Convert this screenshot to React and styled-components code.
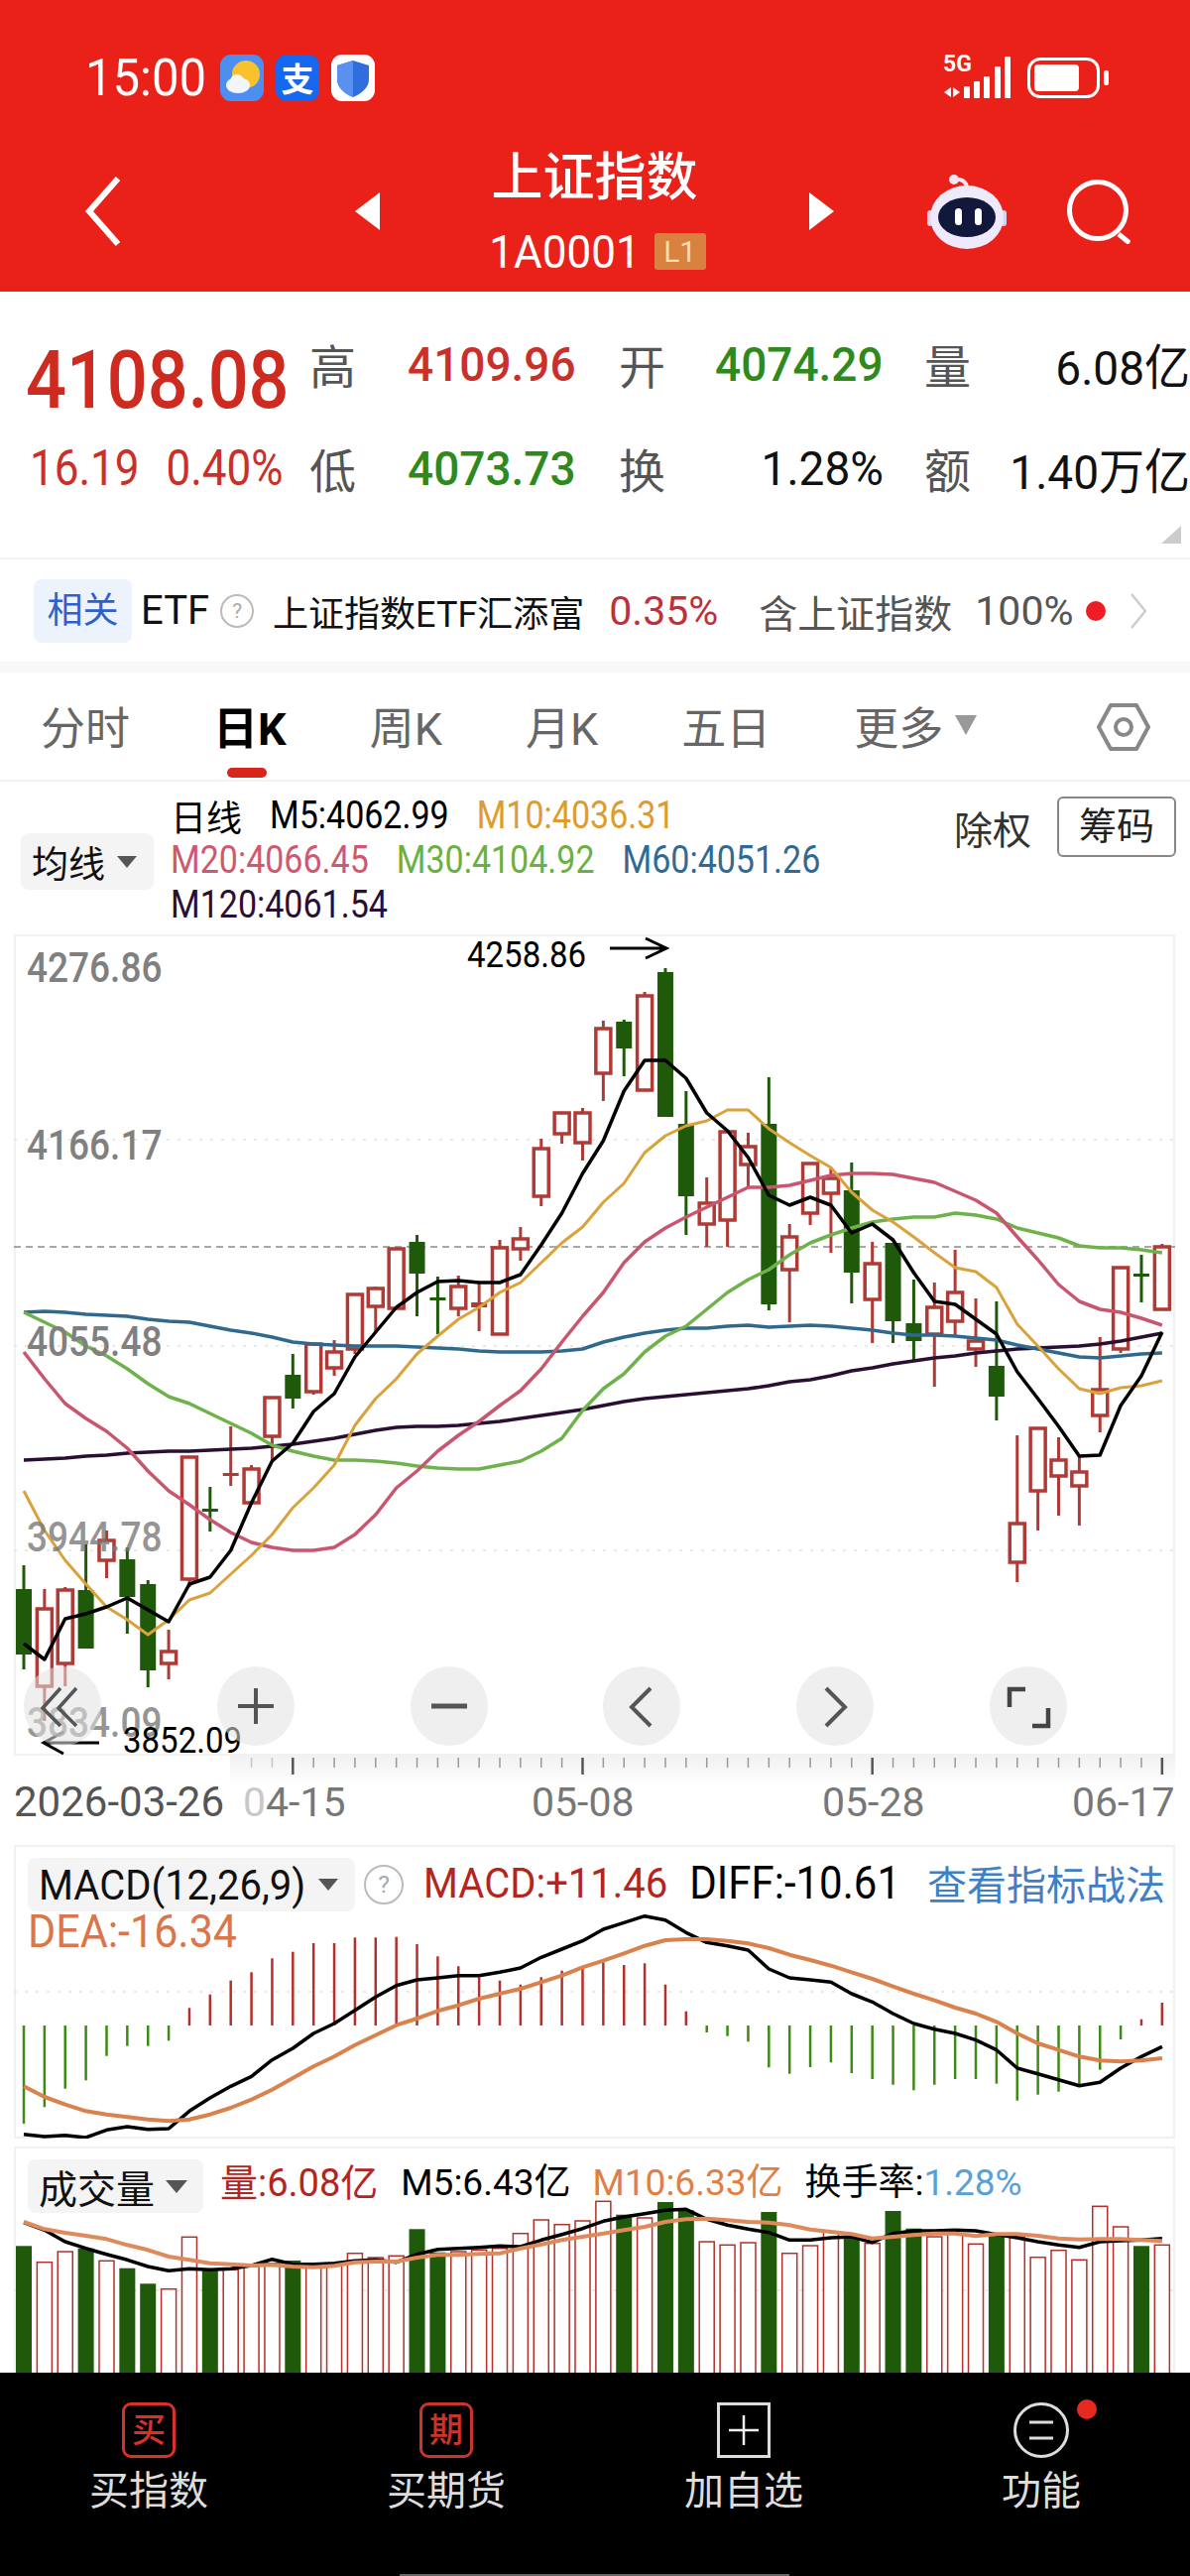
import styled, { createGlobalStyle } from "styled-components"

const GlobalStyle = createGlobalStyle`
  html, body {
    margin: 0;
    padding: 0;
    background: #fff;
  }
  body {
    font-family: Roboto, "Noto Sans CJK SC", sans-serif;
  }
`

const RED = "#b03a35"
const GREEN = "#1f5a0b"
const X = (i) => 24 + 20.87 * i
const line = (arr) => arr.map((y, i) => `${X(i).toFixed(1)},${y}`).join(" ")

// kind, high, body top, body bottom, low
const candles = [
  ["g", 1578, 1602, 1668, 1683], ["r", 1602, 1622, 1700, 1735], ["r", 1600, 1603, 1677, 1700], ["g", 1557, 1603, 1662, 1662],
  ["r", 1543, 1553, 1573, 1591], ["g", 1560, 1572, 1610, 1647], ["g", 1593, 1597, 1684, 1701], ["r", 1643, 1665, 1677, 1693],
  ["r", 1469, 1469, 1592, 1600], ["g", 1499, 1521, 1523, 1544], ["r", 1438, 1485, 1487, 1498], ["r", 1477, 1481, 1515, 1517],
  ["r", 1409, 1409, 1448, 1473], ["g", 1365, 1386, 1410, 1420], ["r", 1355, 1355, 1403, 1406], ["r", 1351, 1363, 1379, 1387],
  ["r", 1305, 1305, 1360, 1365], ["r", 1297, 1299, 1317, 1343], ["r", 1259, 1259, 1319, 1319], ["g", 1245, 1252, 1284, 1327],
  ["g", 1287, 1308, 1310, 1345], ["r", 1286, 1297, 1319, 1327], ["r", 1292, 1313, 1317, 1342], ["r", 1250, 1258, 1345, 1345],
  ["r", 1237, 1249, 1259, 1271], ["r", 1148, 1158, 1206, 1216], ["r", 1122, 1122, 1143, 1153], ["r", 1117, 1122, 1152, 1170],
  ["r", 1029, 1037, 1082, 1110], ["g", 1028, 1030, 1057, 1085], ["r", 1000, 1004, 1099, 1099], ["g", 976, 980, 1126, 1126],
  ["g", 1100, 1133, 1206, 1245], ["r", 1187, 1213, 1234, 1257], ["r", 1141, 1141, 1230, 1257], ["r", 1142, 1156, 1174, 1197],
  ["g", 1086, 1133, 1315, 1321], ["r", 1234, 1247, 1280, 1333], ["r", 1173, 1173, 1223, 1235], ["r", 1178, 1188, 1203, 1263],
  ["g", 1172, 1200, 1283, 1314], ["r", 1252, 1274, 1310, 1354], ["g", 1253, 1253, 1332, 1354], ["g", 1290, 1334, 1352, 1372],
  ["r", 1293, 1318, 1345, 1398], ["r", 1260, 1303, 1332, 1346], ["r", 1309, 1352, 1360, 1378], ["g", 1312, 1377, 1408, 1432],
  ["r", 1447, 1536, 1575, 1595], ["r", 1440, 1440, 1503, 1543], ["r", 1449, 1472, 1488, 1528], ["r", 1468, 1484, 1498, 1538],
  ["r", 1348, 1401, 1427, 1444], ["r", 1278, 1278, 1360, 1364], ["g", 1265, 1284, 1286, 1313], ["r", 1254, 1257, 1320, 1320],
]

const ma5 = [1657,1673,1632,1627,1620,1611,1623,1635,1597,1590,1563,1515,1473,1455,1423,1405,1368,1343,1318,1303,1292,1291,1293,1293,1285,1255,1223,1183,1150,1100,1069,1069,1087,1122,1140,1167,1205,1215,1207,1215,1243,1234,1250,1283,1312,1315,1330,1345,1383,1410,1438,1468,1467,1417,1387,1343]
const ma10 = [1503,1543,1573,1597,1620,1633,1648,1633,1613,1606,1587,1568,1547,1520,1500,1477,1437,1410,1390,1365,1347,1330,1318,1303,1293,1273,1253,1237,1212,1193,1162,1145,1135,1130,1119,1119,1138,1152,1165,1177,1202,1220,1232,1247,1263,1278,1282,1298,1335,1357,1380,1400,1405,1399,1397,1392]
const ma20 = [1363,1390,1415,1430,1443,1460,1483,1503,1517,1532,1545,1555,1560,1563,1563,1560,1547,1527,1500,1483,1463,1447,1433,1417,1402,1380,1353,1327,1303,1273,1252,1238,1227,1217,1207,1197,1197,1195,1190,1185,1183,1183,1184,1188,1192,1201,1210,1223,1247,1270,1295,1312,1320,1323,1329,1336]
const ma30 = [1323,1333,1343,1357,1367,1380,1395,1408,1415,1425,1435,1445,1457,1463,1468,1472,1472,1473,1475,1478,1480,1481,1481,1477,1473,1463,1450,1422,1400,1385,1363,1347,1337,1320,1303,1290,1280,1265,1253,1245,1238,1232,1229,1227,1227,1223,1225,1229,1238,1243,1248,1256,1258,1258,1260,1263]
const ma60 = [1323,1322,1323,1325,1326,1327,1330,1332,1333,1337,1341,1344,1348,1353,1355,1356,1357,1357,1357,1358,1359,1360,1362,1363,1363,1363,1362,1360,1353,1348,1344,1341,1339,1339,1337,1336,1338,1337,1336,1337,1339,1341,1344,1346,1346,1347,1349,1351,1356,1360,1364,1368,1369,1367,1365,1364]
const ma120 = [1472,1471,1470,1468,1467,1465,1464,1463,1463,1462,1461,1460,1458,1456,1453,1450,1446,1442,1439,1438,1438,1437,1435,1433,1430,1427,1424,1421,1417,1413,1410,1408,1406,1404,1402,1400,1397,1393,1391,1387,1382,1379,1375,1372,1369,1367,1364,1362,1360,1359,1358,1357,1355,1352,1348,1344]

// macd values read off the crop, y = 1840 + v / 3
const macdY = (v) => +(1840 + v / 3).toFixed(1)
const macdBars = [903,853,797,772,698,668,668,652,553,512,470,445,403,383,357,357,340,340,338,360,397,427,460,470,482,460,440,435,415,423,418,482,563,627,638,655,733,752,732,718,750,768,785,802,785,768,768,782,833,815,806,790,740,648,587,537]
const diff = [935,942,938,945,922,912,920,918,865,825,790,760,710,675,630,600,560,520,485,468,462,455,455,445,432,400,375,350,315,295,275,287,325,355,365,378,435,462,468,475,510,535,570,600,617,630,650,680,735,752,770,788,778,735,700,670]
const dea = [790,822,845,865,875,883,890,895,890,875,855,830,800,765,730,700,665,635,605,585,562,545,525,510,495,475,455,430,410,388,365,348,345,345,350,358,372,392,408,425,445,465,488,510,530,552,570,595,630,660,680,700,712,715,712,705]

// volume, y = 2150 + v / 3
const volY = (v) => +(2150 + v / 3).toFixed(1)
const volBars = [343,392,360,350,388,410,457,473,316,415,415,405,395,387,400,400,365,378,373,292,362,360,355,350,305,264,278,267,208,248,258,210,235,330,340,333,240,365,342,300,315,335,237,290,315,305,337,305,315,377,356,385,223,285,343,340]
const volGreen = [0,3,5,6,9,13,19,20,29,31,32,36,40,42,43,47,54]
const volM5 = [272,295,330,350,368,385,405,418,412,415,412,402,383,398,398,395,388,385,392,368,353,350,347,343,345,325,308,290,268,255,245,235,232,262,280,292,302,325,325,318,315,332,305,297,297,295,297,308,318,330,340,347,330,327,325,320]
const volM10 = [270,292,303,312,322,340,355,375,385,395,398,402,400,405,407,403,392,390,390,378,370,370,367,365,350,338,325,315,305,295,285,270,262,260,265,270,272,280,293,300,307,320,315,310,305,305,313,307,307,312,320,323,322,322,325,328]

function Candle({ i, c }) {
  const [kind, high, top, bottom, low] = c
  const x = X(i)
  const color = kind === "g" ? GREEN : RED
  const doji = bottom - top < 5
  return (
    <g>
      <line x1={x} x2={x} y1={high} y2={low} stroke={color} strokeWidth="3" />
      {doji ? (
        <rect x={x - 8} y={top} width="16" height={bottom - top + 1} fill={color} />
      ) : kind === "g" ? (
        <rect x={x - 8} y={top} width="16" height={bottom - top} fill={color} />
      ) : (
        <rect x={x - 7.5} y={top} width="15" height={bottom - top} fill="#fff" stroke={color} strokeWidth="3.5" />
      )}
    </g>
  )
}

function MainChart() {
  const lines = [[ma120, "#2a0f33", 3.5], [ma60, "#2f6a8e", 3.5], [ma30, "#6fb24c", 3.5], [ma20, "#c9566f", 3.5], [ma10, "#d9a23b", 3], [ma5, "#000", 3.5]]
  return (
    <svg viewBox="14 942 1171 828" width="1171" height="828" style={{ display: "block" }}>
      {[1149, 1357, 1563].map((y) => (
        <line key={y} x1="14" x2="1185" y1={y} y2={y} stroke="#dfe3e6" strokeWidth="1.5" strokeDasharray="3 8" />
      ))}
      <line x1="14" x2="1185" y1="1257" y2="1257" stroke="#8a8a8a" strokeWidth="1.5" strokeDasharray="7 5" />
      {candles.map((c, i) => <Candle key={i} i={i} c={c} />)}
      {lines.map(([arr, color, w], i) => (
        <polyline key={i} points={line(arr)} fill="none" stroke={color} strokeWidth={w} strokeLinejoin="round" />
      ))}
      <path d="M615 956H672M651 946L672 956L651 966" fill="none" stroke="#000" strokeWidth="3" />
      <path d="M100 1757H44M64 1746L44 1757L64 1768" fill="none" stroke="#000" strokeWidth="3" />
    </svg>
  )
}

function Ruler() {
  const ticks = []
  for (let i = 11; i < 56; i++) ticks.push(i)
  return (
    <svg viewBox="0 0 1200 30" width="1200" height="30" style={{ display: "block" }}>
      <defs>
        <linearGradient id="rulerFade" x1="0" x2="0" y1="0" y2="1">
          <stop offset="0" stopColor="#f1f1f1" />
          <stop offset="1" stopColor="#fff" />
        </linearGradient>
      </defs>
      <rect x="232" y="0" width="953" height="30" fill="url(#rulerFade)" />
      {ticks.map((i) => {
        const long = (i - 13) % 14 === 0
        return (
          <line
            key={i}
            x1={X(i)}
            x2={X(i)}
            y1="2"
            y2={long ? 19 : 12}
            stroke={long ? "#555" : "#999"}
            strokeWidth={long ? 2.5 : 1.5}
            opacity={i < 13 ? 0.5 : 1}
          />
        )
      })}
    </svg>
  )
}

function MacdChart() {
  return (
    <svg viewBox="14 1860 1171 296" width="1171" height="296" style={{ display: "block" }}>
      <line x1="14" x2="1185" y1="2008" y2="2008" stroke="#e2e2e2" strokeWidth="1.5" strokeDasharray="3 8" />
      {macdBars.map((v, i) => {
        const y = macdY(v)
        return <line key={i} x1={X(i)} x2={X(i)} y1="2042" y2={y} stroke={y > 2042 ? "#3d8a14" : "#b5302a"} strokeWidth="2.5" />
      })}
      <polyline points={line(diff.map(macdY))} fill="none" stroke="#000" strokeWidth="3.5" strokeLinejoin="round" />
      <polyline points={line(dea.map(macdY))} fill="none" stroke="#d9824e" strokeWidth="4" strokeLinejoin="round" />
    </svg>
  )
}

function VolumeChart() {
  return (
    <svg viewBox="14 2164 1171 228" width="1171" height="228" style={{ display: "block" }}>
      <line x1="14" x2="1185" y1="2309" y2="2309" stroke="#e2e2e2" strokeWidth="1.5" strokeDasharray="3 8" />
      {volBars.map((v, i) => {
        const y = volY(v)
        return volGreen.includes(i) ? (
          <rect key={i} x={X(i) - 8} y={y} width="16" height={2400 - y} fill={GREEN} />
        ) : (
          <rect key={i} x={X(i) - 7.5} y={y} width="15" height={2400 - y} fill="#fff" stroke="#b5302a" strokeWidth="1.5" />
        )
      })}
      <polyline points={line(volM5.map(volY))} fill="none" stroke="#000" strokeWidth="3.5" strokeLinejoin="round" />
      <polyline points={line(volM10.map(volY))} fill="none" stroke="#df8a5c" strokeWidth="4" strokeLinejoin="round" />
    </svg>
  )
}

export default function App() {
  return (
    <Page>
      <GlobalStyle />
      <Header>
        <StatusRow>
          <Clock>15:00</Clock>
          <AppIcon $bg="#4c8ff0">
            <svg viewBox="0 0 44 47" width="44" height="47">
              <circle cx="26" cy="20" r="14" fill="#f9c22c" />
              <ellipse cx="18" cy="31" rx="12" ry="8" fill="#f2f6fb" />
              <circle cx="17" cy="27" r="7" fill="#f2f6fb" />
            </svg>
          </AppIcon>
          <AppIcon $bg="#1668ee"><Alipay>支</Alipay></AppIcon>
          <AppIcon $bg="#fff">
            <svg viewBox="0 0 44 47" width="44" height="47">
              <path d="M22 6L38 11V25C38 33 31 39 22 43C13 39 6 33 6 25V11Z" fill="#2f6fdd" />
              <path d="M22 6V43C13 39 6 33 6 25V11Z" fill="#5a90ef" />
            </svg>
          </AppIcon>
          <StatusRight>
            <Signal>
              <FiveG>5G</FiveG>
              <svg viewBox="0 0 68 42" width="68" height="42">
                <path d="M8 31V41L1 36ZM10 31L17 36L10 41Z" fill="#fff" />
                <rect x="21" y="30" width="6" height="12" rx="1" fill="#fff" />
                <rect x="31" y="25" width="6" height="17" rx="1" fill="#fff" />
                <rect x="41" y="20" width="6" height="22" rx="1" fill="#fff" />
                <rect x="52" y="10" width="6" height="32" rx="1" fill="#fff" />
                <rect x="62" y="0" width="6" height="42" rx="1" fill="#fff" />
              </svg>
            </Signal>
            <Battery><BatteryFill /></Battery>
            <BatteryNub />
          </StatusRight>
        </StatusRow>
        <NavRow>
          <svg viewBox="0 0 36 72" width="36" height="72">
            <path d="M33 3L4 36L33 69" fill="none" stroke="#fff" strokeWidth="6" />
          </svg>
          <NavTriangle $dir="left" $ml={236} />
          <TitleBlock>
            <Title>上证指数</Title>
            <CodeRow>
              <Code>1A0001</Code>
              <Level>L1</Level>
            </CodeRow>
          </TitleBlock>
          <NavTriangle $dir="right" />
          <RobotIcon viewBox="0 0 80 76" width="80" height="76">
            <path d="M40 15C40 8 34 5 28 6" fill="none" stroke="#f3e6f4" strokeWidth="4" />
            <circle cx="27" cy="6" r="5" fill="#f3e6f4" />
            <rect x="0" y="37" width="6" height="16" rx="3" fill="#d9d2f2" />
            <rect x="74" y="37" width="6" height="16" rx="3" fill="#d9d2f2" />
            <ellipse cx="40" cy="44" rx="37" ry="32" fill="#eeeafc" />
            <ellipse cx="40" cy="44" rx="29" ry="20" fill="#12183c" />
            <rect x="28" y="35" width="7" height="17" rx="3.5" fill="#fff" />
            <rect x="48" y="35" width="7" height="17" rx="3.5" fill="#fff" />
          </RobotIcon>
          <SearchIcon viewBox="0 0 64 66" width="64" height="66">
            <circle cx="31" cy="32" r="28.5" fill="none" stroke="#fff" strokeWidth="5" />
            <path d="M52 56L63 65" stroke="#fff" strokeWidth="5" />
          </SearchIcon>
        </NavRow>
      </Header>

      <Stats>
        <BigPrice>4108.08</BigPrice>
        <StatLabel>高</StatLabel>
        <StatValue $color="#c9302a">4109.96</StatValue>
        <StatLabel>开</StatLabel>
        <StatValue $color="#2f8a1e">4074.29</StatValue>
        <StatLabel>量</StatLabel>
        <StatValue $end>6.08亿</StatValue>

        <ChangeRow>
          <Change>16.19</Change>
          <Change>0.40%</Change>
        </ChangeRow>
        <StatLabel>低</StatLabel>
        <StatValue $color="#2f8a1e">4073.73</StatValue>
        <StatLabel>换</StatLabel>
        <StatValue $end $pad={41}>1.28%</StatValue>
        <StatLabel>额</StatLabel>
        <StatValue $end>1.40万亿</StatValue>
        <Corner />
      </Stats>

      <EtfRow>
        <EtfTag>相关</EtfTag>
        <EtfText $ml={9} $size={40}>ETF</EtfText>
        <HelpMark $size={34} $ml={11}>?</HelpMark>
        <EtfText $ml={19}>上证指数ETF汇添富</EtfText>
        <EtfText $ml={25} $size={41} $color="#c0303a">0.35%</EtfText>
        <EtfText $ml={41} $size={39} $color="#555">含上证指数</EtfText>
        <EtfText $ml={23} $size={41} $color="#555">100%</EtfText>
        <RedDot $ml={13} />
        <svg viewBox="0 0 18 36" width="18" height="36" style={{ marginLeft: 24 }}>
          <path d="M2 1L16 18L2 35" fill="none" stroke="#ccc" strokeWidth="2.5" />
        </svg>
      </EtfRow>
      <Band />

      <Tabs>
        <Tab>分时</Tab>
        <Tab $active>日K</Tab>
        <Tab>周K</Tab>
        <Tab>月K</Tab>
        <Tab>五日</Tab>
        <Tab>更多<Caret $w={11} $h={20} $color="#999" $ml={12} /></Tab>
        <HexIcon viewBox="0 0 54 50" width="54" height="50">
          <path d="M14 3H40L52 25L40 47H14L2 25Z" fill="none" stroke="#888" strokeWidth="4" strokeLinejoin="round" />
          <circle cx="27" cy="25" r="8" fill="none" stroke="#888" strokeWidth="4" />
        </HexIcon>
      </Tabs>

      <LegendBar>
        <Selector $mt={52} $w={134} $h={57}>
          <SelectorText $size={37}>均线</SelectorText>
          <Caret $w={10} $h={12} $color="#555" $ml={12} />
        </Selector>
        <LegendRows>
          <LegendRow>
            <LegendItem $cjk>日线</LegendItem>
            <LegendItem>M5:4062.99</LegendItem>
            <LegendItem $color="#dc9c30">M10:4036.31</LegendItem>
          </LegendRow>
          <LegendRow>
            <LegendItem $color="#cf5870">M20:4066.45</LegendItem>
            <LegendItem $color="#6bb043">M30:4104.92</LegendItem>
            <LegendItem $color="#2f6a94">M60:4051.26</LegendItem>
          </LegendRow>
          <LegendRow>
            <LegendItem $color="#2a0f33">M120:4061.54</LegendItem>
          </LegendRow>
        </LegendRows>
        <LegendActions>
          <ActionText>除权</ActionText>
          <ChipButton>筹码</ChipButton>
        </LegendActions>
      </LegendBar>

      <ChartPanel $h={828}>
        <MainChart />
        <PriceTag $top={34}>4276.86</PriceTag>
        <PriceTag $top={213}>4166.17</PriceTag>
        <PriceTag $top={411}>4055.48</PriceTag>
        <PriceTag $top={608} $faded>3944.78</PriceTag>
        <PriceTag $top={795} $faded>3834.09</PriceTag>
        <ExtremeTag $top={20} $left={457}>4258.86</ExtremeTag>
        <ExtremeTag $top={812} $left={110}>3852.09</ExtremeTag>
        <FloatBar>
          <FloatButton>
            <svg viewBox="0 0 78 80" width="78" height="80">
              <path d="M37 22L19 42L37 60M53 22L35 42L53 60" fill="none" stroke="#555" strokeWidth="3.5" />
            </svg>
          </FloatButton>
          <FloatButton>
            <svg viewBox="0 0 78 80" width="78" height="80">
              <path d="M21 40H57M39 22V58" fill="none" stroke="#555" strokeWidth="4" />
            </svg>
          </FloatButton>
          <FloatButton>
            <svg viewBox="0 0 78 80" width="78" height="80">
              <path d="M21 40H57" fill="none" stroke="#555" strokeWidth="5" />
            </svg>
          </FloatButton>
          <FloatButton>
            <svg viewBox="0 0 78 80" width="78" height="80">
              <path d="M48 22L29 41L48 60" fill="none" stroke="#555" strokeWidth="4" />
            </svg>
          </FloatButton>
          <FloatButton>
            <svg viewBox="0 0 78 80" width="78" height="80">
              <path d="M30 22L49 41L30 60" fill="none" stroke="#555" strokeWidth="4" />
            </svg>
          </FloatButton>
          <FloatButton>
            <svg viewBox="0 0 78 80" width="78" height="80">
              <path d="M20 41V23H36M59 42V60H43" fill="none" stroke="#444" strokeWidth="4.5" />
            </svg>
          </FloatButton>
        </FloatBar>
      </ChartPanel>

      <Ruler />
      <DateRow>
        <DateLabel $strong>2026-03-26</DateLabel>
        <DateLabel><FadedDigit>0</FadedDigit>4-15</DateLabel>
        <DateLabel>05-08</DateLabel>
        <DateLabel>05-28</DateLabel>
        <DateLabel>06-17</DateLabel>
      </DateRow>

      <ChartPanel $h={296}>
        <MacdChart />
        <PanelHead>
          <Selector $w={330} $h={54}>
            <SelectorText $size={40} $num>MACD(12,26,9)</SelectorText>
            <Caret $w={10} $h={12} $color="#555" $ml={13} />
          </Selector>
          <HelpMark $size={40} $ml={9}>?</HelpMark>
          <MacdValue $ml={20} $color="#b3261e">MACD:+11.46</MacdValue>
          <MacdValue $ml={22} $size={42}>DIFF:-10.61</MacdValue>
          <MacdLink>查看指标战法</MacdLink>
        </PanelHead>
        <DeaValue>DEA:-16.34</DeaValue>
      </ChartPanel>

      <ChartPanel $h={228} $mt={8}>
        <VolumeChart />
        <PanelHead>
          <Selector $w={177} $h={54}>
            <SelectorText $size={39}>成交量</SelectorText>
            <Caret $w={11} $h={13} $color="#555" $ml={11} />
          </Selector>
          <VolValue $ml={17} $color="#b3261e">量:6.08亿</VolValue>
          <VolValue $ml={23} $size={37}>M5:6.43亿</VolValue>
          <VolValue $ml={22} $size={37} $color="#df7f45">M10:6.33亿</VolValue>
          <VolValue $ml={22} $size={37}>换手率:<VolRate>1.28%</VolRate></VolValue>
        </PanelHead>
      </ChartPanel>

      <BottomNav>
        <NavItem>
          <TradeBox $color="#d9302a">买</TradeBox>
          <NavLabel>买指数</NavLabel>
        </NavItem>
        <NavItem>
          <TradeBox $color="#c9352a">期</TradeBox>
          <NavLabel>买期货</NavLabel>
        </NavItem>
        <NavItem>
          <svg viewBox="0 0 54 56" width="54" height="56">
            <rect x="1.5" y="1.5" width="51" height="53" fill="none" stroke="#ddd" strokeWidth="3" />
            <path d="M12 28H42M27 13V43" fill="none" stroke="#eee" strokeWidth="2.5" />
          </svg>
          <NavLabel>加自选</NavLabel>
        </NavItem>
        <NavItem>
          <svg viewBox="0 0 56 56" width="56" height="56">
            <circle cx="28" cy="28" r="26.5" fill="none" stroke="#ddd" strokeWidth="3" />
            <path d="M16 20H40M16 36H40" fill="none" stroke="#ddd" strokeWidth="3" />
          </svg>
          <NavLabel>功能</NavLabel>
          <NavDot />
        </NavItem>
        <HomeBar />
      </BottomNav>
    </Page>
  )
}

const Page = styled.div`
  width: 1200px;
  height: 2597px;
  overflow: hidden;
  position: relative;
  background: #fff;
`

const Header = styled.header`
  height: 294px;
  background: #ea2119;
  color: #fff;
  box-sizing: border-box;
`

const StatusRow = styled.div`
  height: 117px;
  box-sizing: border-box;
  padding: 39px 82px 0 86px;
  display: flex;
  align-items: center;
`

const Clock = styled.span`
  font-size: 49px;
  margin-right: 14px;
  transform: scaleY(1.04);
`

const AppIcon = styled.div`
  width: 44px;
  height: 47px;
  border-radius: 11px;
  background: ${(p) => p.$bg};
  margin-right: 12px;
  overflow: hidden;
  display: flex;
  align-items: center;
  justify-content: center;
`

const Alipay = styled.span`
  font-size: 33px;
  font-weight: 700;
  color: #fff;
`

const StatusRight = styled.div`
  margin-left: auto;
  display: flex;
  align-items: center;
`

const Signal = styled.div`
  position: relative;
  width: 68px;
  height: 42px;
  margin-right: 17px;
`

const FiveG = styled.span`
  position: absolute;
  left: 0;
  top: -5px;
  font-size: 23px;
  line-height: 26px;
  font-weight: 700;
`

const Battery = styled.div`
  width: 73px;
  height: 41px;
  box-sizing: border-box;
  border: 3px solid #fff;
  border-radius: 13px;
  padding: 4px;
`

const BatteryFill = styled.div`
  width: 45px;
  height: 100%;
  background: #fff;
  border-radius: 4px;
`

const BatteryNub = styled.div`
  width: 5px;
  height: 15px;
  margin-left: 4px;
  background: #fff;
  border-radius: 2px;
`

const NavRow = styled.div`
  height: 177px;
  box-sizing: border-box;
  padding: 14px 0 0 86px;
  display: flex;
  align-items: center;
`

const NavTriangle = styled.div`
  width: 0;
  height: 0;
  margin-left: ${(p) => p.$ml || 0}px;
  border-top: 19px solid transparent;
  border-bottom: 19px solid transparent;
  ${(p) => (p.$dir === "left" ? "border-right: 25px solid #fff;" : "border-left: 25px solid #fff;")}
`

const TitleBlock = styled.div`
  width: 433px;
  display: flex;
  flex-direction: column;
  align-items: center;
`

const Title = styled.div`
  font-size: 52px;
  line-height: 60px;
  font-weight: 500;
  margin-top: 3px;
`

const CodeRow = styled.div`
  margin-top: 19px;
  height: 50px;
  display: flex;
  align-items: center;
  gap: 14px;
  transform: translateX(3px);
`

const Code = styled.span`
  font-size: 44px;
  transform: scaleY(1.06);
`

const Level = styled.span`
  width: 52px;
  height: 37px;
  line-height: 37px;
  text-align: center;
  font-size: 30px;
  border-radius: 3px;
  background: #d9823f;
  color: #f5dcb4;
`

const RobotIcon = styled.svg`
  margin-left: 94px;
`

const SearchIcon = styled.svg`
  margin-left: 61px;
`

const Stats = styled.section`
  position: relative;
  height: 270px;
  box-sizing: border-box;
  padding: 20px 0 0 26px;
  border-bottom: 2px solid #f3f3f3;
  display: grid;
  grid-template-columns: 286px 99px 213px 97px 211px 46px 222px;
  grid-template-rows: 105px 105px;
  align-items: center;
`

const BigPrice = styled.div`
  font-size: 72px;
  font-weight: 500;
  color: #cf2a1f;
  padding-top: 30px;
  transform: scaleY(1.12);
`

const StatLabel = styled.div`
  font-size: 47px;
  color: #555;
`

const StatValue = styled.div`
  font-size: 46px;
  font-weight: ${(p) => (p.$color ? 500 : 400)};
  color: ${(p) => p.$color || "#111"};
  text-align: ${(p) => (p.$end ? "right" : "left")};
  padding-right: ${(p) => p.$pad || 0}px;
  white-space: nowrap;
  transform: scaleY(1.06);
`

const ChangeRow = styled.div`
  display: flex;
  gap: 27px;
  padding-left: 4px;
`

const Change = styled.span`
  font-size: 44px;
  color: #c9302a;
  transform: scaleY(1.14);
`

const Corner = styled.div`
  position: absolute;
  right: 9px;
  bottom: 14px;
  width: 0;
  height: 0;
  border-bottom: 18px solid #ccc;
  border-left: 20px solid transparent;
`

const EtfRow = styled.div`
  height: 103px;
  box-sizing: border-box;
  padding-left: 34px;
  display: flex;
  align-items: center;
`

const EtfTag = styled.div`
  width: 99px;
  height: 64px;
  line-height: 64px;
  text-align: center;
  border-radius: 8px;
  background: #edf3fc;
  color: #2f62c8;
  font-size: 36px;
`

const EtfText = styled.span`
  margin-left: ${(p) => p.$ml || 0}px;
  font-size: ${(p) => p.$size || 36}px;
  color: ${(p) => p.$color || "#111"};
  white-space: nowrap;
`

const HelpMark = styled.span`
  width: ${(p) => p.$size}px;
  height: ${(p) => p.$size}px;
  margin-left: ${(p) => p.$ml || 0}px;
  flex: none;
  box-sizing: border-box;
  border: 2px solid #bbb;
  border-radius: 50%;
  color: #aaa;
  font-size: ${(p) => p.$size * 0.62}px;
  line-height: ${(p) => p.$size - 4}px;
  text-align: center;
`

const RedDot = styled.span`
  width: 20px;
  height: 20px;
  margin-left: ${(p) => p.$ml || 0}px;
  border-radius: 50%;
  background: #ee1c25;
`

const Band = styled.div`
  height: 11px;
  background: #f8f8f8;
`

const Tabs = styled.nav`
  height: 110px;
  box-sizing: border-box;
  padding: 0 40px 0 41px;
  border-bottom: 2px solid #f2f2f2;
  display: flex;
  align-items: center;
  gap: 84px;
`

const Tab = styled.div`
  position: relative;
  display: flex;
  align-items: center;
  font-size: 45px;
  height: 106px;
  margin-top: -2px;
  font-weight: ${(p) => (p.$active ? 700 : 400)};
  color: ${(p) => (p.$active ? "#000" : "#666")};
  ${(p) =>
    p.$active &&
    `&::after {
      content: "";
      position: absolute;
      left: 14px;
      bottom: 0;
      width: 40px;
      height: 10px;
      border-radius: 5px;
      background: #d9261c;
    }`}
`

const Caret = styled.span`
  flex: none;
  display: inline-block;
  width: 0;
  height: 0;
  margin-left: ${(p) => p.$ml || 0}px;
  border-left: ${(p) => p.$w}px solid transparent;
  border-right: ${(p) => p.$w}px solid transparent;
  border-top: ${(p) => p.$h}px solid ${(p) => p.$color};
`

const HexIcon = styled.svg`
  margin-left: auto;
  margin-top: 2px;
`

const LegendBar = styled.div`
  height: 154px;
  box-sizing: border-box;
  padding-left: 21px;
  display: flex;
  align-items: flex-start;
`

const Selector = styled.div`
  width: ${(p) => p.$w}px;
  height: ${(p) => p.$h}px;
  margin-top: ${(p) => p.$mt || 0}px;
  flex: none;
  box-sizing: border-box;
  padding-left: 11px;
  display: flex;
  align-items: center;
  border-radius: 8px;
  background: #f4f4f4;
`

const SelectorText = styled.span`
  font-size: ${(p) => p.$size}px;
  color: #111;
  white-space: nowrap;
  ${(p) => p.$num && "transform: scaleY(1.08);"}
`

const LegendRows = styled.div`
  margin-left: 17px;
  padding-top: 11px;
  display: flex;
  flex-direction: column;
`

const LegendRow = styled.div`
  height: 45px;
  display: flex;
  align-items: center;
  gap: 28px;
`

const LegendItem = styled.span`
  font-size: ${(p) => (p.$cjk ? 36 : 34)}px;
  color: ${(p) => p.$color || "#000"};
  white-space: nowrap;
  transform: scaleY(${(p) => (p.$cjk ? 1 : 1.12)});
`

const LegendActions = styled.div`
  margin-left: auto;
  margin-top: 15px;
  padding-right: 14px;
  display: flex;
  align-items: center;
  gap: 26px;
`

const ActionText = styled.span`
  font-size: 39px;
  color: #333;
`

const ChipButton = styled.div`
  width: 120px;
  height: 61px;
  line-height: 57px;
  box-sizing: border-box;
  text-align: center;
  font-size: 38px;
  color: #222;
  border: 2px solid #888;
  border-radius: 6px;
`

const ChartPanel = styled.section`
  position: relative;
  width: 1171px;
  height: ${(p) => p.$h}px;
  margin: ${(p) => p.$mt || 0}px 0 0 14px;
  box-shadow: inset 0 0 0 2px #f1f1f1;
`

const PriceTag = styled.span`
  position: absolute;
  left: 13px;
  top: ${(p) => p.$top}px;
  font-size: 37px;
  line-height: 1;
  font-weight: 500;
  color: ${(p) => (p.$faded ? "rgba(120,120,120,.8)" : "#808080")};
  transform: translateY(-50%) scaleY(1.14);
`

const ExtremeTag = styled.span`
  position: absolute;
  left: ${(p) => p.$left}px;
  top: ${(p) => p.$top}px;
  font-size: 33px;
  line-height: 1;
  color: #000;
  transform: translateY(-50%) scaleY(1.1);
`

const FloatBar = styled.div`
  position: absolute;
  left: 10px;
  top: 738px;
  display: flex;
  gap: 116.8px;
`

const FloatButton = styled.div`
  width: 78px;
  height: 80px;
  border-radius: 50%;
  background: rgba(226, 226, 226, 0.55);
`

const DateRow = styled.div`
  height: 60px;
  box-sizing: border-box;
  padding-left: 14px;
  display: grid;
  grid-template-columns: 231px 291px 293px 252px 1fr;
`

const DateLabel = styled.span`
  font-size: ${(p) => (p.$strong ? 42 : 41)}px;
  line-height: 34px;
  color: ${(p) => (p.$strong ? "#555" : "#777")};
`

const FadedDigit = styled.span`
  color: #c8c8c8;
`

const PanelHead = styled.div`
  position: absolute;
  left: 14px;
  top: 13px;
  right: 10px;
  display: flex;
  align-items: center;
`

const MacdValue = styled.span`
  margin-left: ${(p) => p.$ml}px;
  margin-top: -3px;
  font-size: ${(p) => p.$size || 40}px;
  color: ${(p) => p.$color || "#000"};
  white-space: nowrap;
  transform: scaleY(1.08);
`

const MacdLink = styled.span`
  margin-left: auto;
  margin-top: -4px;
  font-size: 40px;
  color: #3f7fc8;
  white-space: nowrap;
`

const DeaValue = styled.span`
  position: absolute;
  left: 14px;
  top: 67px;
  font-size: 43px;
  line-height: 40px;
  color: #d9764a;
  transform: scaleY(1.06);
`

const VolValue = styled.span`
  margin-left: ${(p) => p.$ml}px;
  margin-top: -14px;
  font-size: ${(p) => p.$size || 38}px;
  color: ${(p) => p.$color || "#000"};
  white-space: nowrap;
`

const VolRate = styled.span`
  color: #5aa0d8;
`

const BottomNav = styled.nav`
  position: relative;
  height: 205px;
  background: #000;
  display: grid;
  grid-template-columns: repeat(4, 300px);
`

const NavItem = styled.div`
  position: relative;
  box-sizing: border-box;
  padding-top: 30px;
  display: flex;
  flex-direction: column;
  align-items: center;
`

const TradeBox = styled.div`
  width: 54px;
  height: 56px;
  line-height: 50px;
  box-sizing: border-box;
  text-align: center;
  font-size: 34px;
  font-weight: 500;
  color: ${(p) => p.$color};
  border: 3px solid ${(p) => p.$color};
  border-radius: 9px;
`

const NavLabel = styled.div`
  margin-top: 8px;
  font-size: 40px;
  line-height: 52px;
  color: #ddd;
`

const NavDot = styled.span`
  position: absolute;
  left: 186px;
  top: 27px;
  width: 20px;
  height: 20px;
  border-radius: 50%;
  background: #e8291f;
`

const HomeBar = styled.div`
  position: absolute;
  left: 403px;
  bottom: 0;
  width: 393px;
  height: 2px;
  background: #666;
`
